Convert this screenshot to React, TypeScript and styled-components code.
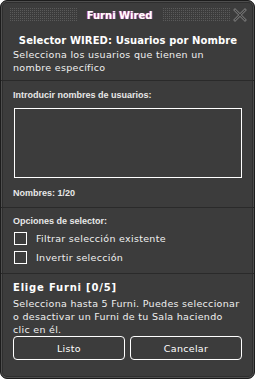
import styled, { createGlobalStyle } from 'styled-components'

const GlobalStyle = createGlobalStyle`
  html, body {
    margin: 0;
    padding: 0;
    background: #ffffff;
  }
  body {
    font-family: 'DejaVu Sans', 'Liberation Sans', sans-serif;
  }
`

const Window = styled.div`
  box-sizing: border-box;
  width: 255px;
  height: 379px;
  background: #3c3c3c;
  border: 1px solid #1c1c1c;
  border-radius: 7px;
  box-shadow: inset 0 0 0 1px #4e4e4e, inset 0 0 0 2px #2e2e2e;
  display: flex;
  flex-direction: column;
  color: #ffffff;
  overflow: hidden;
`

const Header = styled.div`
  display: flex;
  align-items: center;
  gap: 10px;
  height: 26px;
  padding: 0 6px 0 8px;
`

const Dots = styled.div`
  flex: 1;
  height: 14px;
  background: conic-gradient(#5a5a5a 25%, transparent 0) 0 0 / 2px 2px;
  margin-top: 2px;
`

const Title = styled.div`
  font-family: 'DejaVu Sans', sans-serif;
  font-weight: bold;
  font-size: 10px;
  color: #ffffff;
  text-shadow: -1px 0 0 rgba(255, 60, 90, 0.7), 1px 0 0 rgba(90, 110, 255, 0.7);
  padding-top: 2px;
`

const Close = styled.div`
  width: 16px;
  height: 16px;
  display: flex;
  align-items: center;
  justify-content: center;
  margin-left: -8px;
  margin-top: 2px;
`

const Section = styled.div<{ $top: number; $bottom: number }>`
  display: flex;
  flex-direction: column;
  padding: ${({ $top, $bottom }) => `${$top}px 11px ${$bottom}px 12px`};
  border-bottom: 1px solid #2a2a2a;
  &:last-child {
    border-bottom: none;
  }
`

const Heading = styled.div<{ $center?: boolean; $spacing?: number }>`
  font-weight: bold;
  font-size: 10px;
  line-height: 12px;
  letter-spacing: ${({ $spacing }) => $spacing ?? 0.1}px;
  text-align: ${({ $center }) => ($center ? 'center' : 'left')};
`

const Text = styled.div<{ $top: number }>`
  font-size: 9.5px;
  line-height: 13px;
  letter-spacing: 0.3px;
  color: #f0f0f0;
  margin-top: ${({ $top }) => $top}px;
`

const Label = styled.div`
  font-family: 'Liberation Sans', sans-serif;
  font-weight: bold;
  font-size: 9px;
  line-height: 12px;
  color: #e8e8e8;
`

const TextBox = styled.div`
  box-sizing: border-box;
  height: 70px;
  border: 1px solid #ffffff;
  margin: 7px 1px 9px 1px;
`

const CheckList = styled.div`
  display: flex;
  flex-direction: column;
  gap: 6px;
  margin-top: 5px;
`

const CheckRow = styled.label`
  display: flex;
  align-items: center;
  gap: 9px;
  height: 13px;
  font-size: 9.5px;
  letter-spacing: 0.3px;
  color: #f0f0f0;
`

const Box = styled.span`
  box-sizing: border-box;
  width: 13px;
  height: 13px;
  border: 1px solid #ffffff;
  margin-left: 1px;
`

const Buttons = styled.div`
  display: grid;
  grid-template-columns: 1fr 1fr;
  gap: 5px;
  padding-right: 1px;
`

const Button = styled.button`
  height: 24px;
  background: transparent;
  border: 1px solid #ffffff;
  border-radius: 4px;
  color: #ffffff;
  font-family: 'DejaVu Sans', sans-serif;
  font-size: 9.5px;
  letter-spacing: 0.3px;
`

export default function App() {
  return (
    <>
      <GlobalStyle />
      <Window>
        <Header>
          <Dots />
          <Title>Furni Wired</Title>
          <Dots />
          <Close>
            <svg width="14" height="14" viewBox="0 0 14 14">
              <path d="M2 2 L12 12 M12 2 L2 12" stroke="#6c6c6c" strokeWidth="3" strokeLinecap="square" />
              <path d="M2 2 L12 12 M12 2 L2 12" stroke="#3c3c3c" strokeWidth="1" />
            </svg>
          </Close>
        </Header>
        <Section $top={8} $bottom={6}>
          <Heading $center>Selector WIRED: Usuarios por Nombre</Heading>
          <Text $top={1}>
            Selecciona los usuarios que tienen un
            <br />
            nombre específico
          </Text>
        </Section>
        <Section $top={8} $bottom={8}>
          <Label>Introducir nombres de usuarios:</Label>
          <TextBox />
          <Label>Nombres: 1/20</Label>
        </Section>
        <Section $top={7} $bottom={9}>
          <Label>Opciones de selector:</Label>
          <CheckList>
            <CheckRow>
              <Box />
              Filtrar selección existente
            </CheckRow>
            <CheckRow>
              <Box />
              Invertir selección
            </CheckRow>
          </CheckList>
        </Section>
        <Section $top={8} $bottom={0}>
          <Heading $spacing={0.8}>Elige Furni [0/5]</Heading>
          <Text $top={3}>
            Selecciona hasta 5 Furni. Puedes seleccionar
            <br />
            o desactivar un Furni de tu Sala haciendo
            <br />
            clic en él.
          </Text>
          <Buttons>
            <Button>Listo</Button>
            <Button>Cancelar</Button>
          </Buttons>
        </Section>
      </Window>
    </>
  )
}
